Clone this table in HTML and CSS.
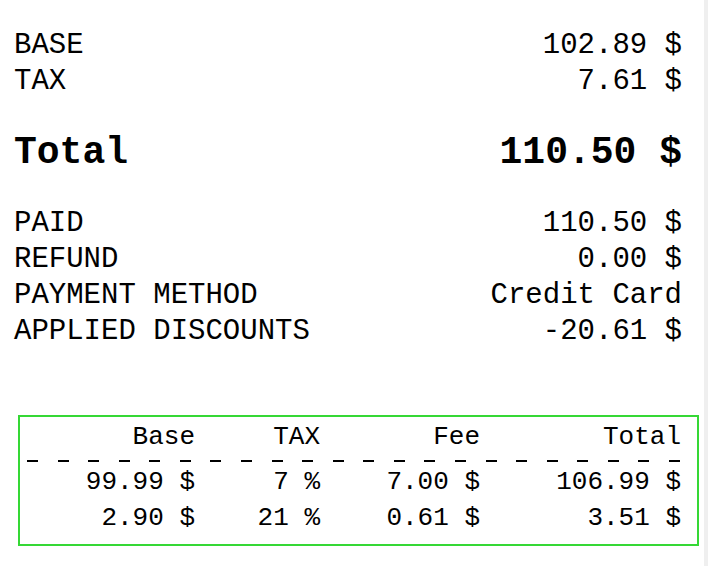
FILE: index.html
```html
<!DOCTYPE html>
<html lang="en">
<head>
<meta charset="utf-8">
<title>Receipt</title>
<link rel="stylesheet" href="styles.css">
</head>
<body>
<div class="receipt">
  <div class="row"><span>BASE</span><span>102.89 $</span></div>
  <div class="row"><span>TAX</span><span>7.61 $</span></div>
  <div class="row total"><span>Total</span><span>110.50 $</span></div>
  <div class="row"><span>PAID</span><span>110.50 $</span></div>
  <div class="row"><span>REFUND</span><span>0.00 $</span></div>
  <div class="row"><span>PAYMENT METHOD</span><span>Credit Card</span></div>
  <div class="row"><span>APPLIED DISCOUNTS</span><span>-20.61 $</span></div>

  <div class="breakdown">
    <div class="grid head"><span>Base</span><span>TAX</span><span>Fee</span><span>Total</span></div>
    <div class="dashes" role="separator"></div>
    <div class="grid"><span>99.99 $</span><span>7 %</span><span>7.00 $</span><span>106.99 $</span></div>
    <div class="grid"><span>2.90 $</span><span>21 %</span><span>0.61 $</span><span>3.51 $</span></div>
  </div>
</div>
</body>
</html>
```

FILE: styles.css
```css
html {
  background: #efefef;
}

body {
  margin: 0;
  width: 704px;
  min-height: 566px;
  background: #ffffff;
  color: #000000;
  font-family: "Liberation Mono", "Courier New", monospace;
}

.receipt {
  padding: 28px 0 0 0;
}

.row {
  display: flex;
  justify-content: space-between;
  padding: 0 22px 0 14px;
  font-size: 29px;
  line-height: 36px;
  white-space: pre;
}

.row.total {
  font-size: 38px;
  font-weight: bold;
  line-height: 106px;
}

.breakdown {
  margin: 65px 5px 0 18px;
  border: 2px solid #35d835;
  padding: 2px 16px 8px 5px;
  font-size: 26px;
}

.grid {
  display: grid;
  grid-template-columns: 170px 125px 160px 1fr;
  line-height: 36px;
  text-align: right;
  white-space: pre;
}

.dashes {
  width: 654px;
  height: 2px;
  margin: 5px 0 2px 2px;
  background: repeating-linear-gradient(to right, #000 0 11px, transparent 11px 30.57px);
}
```
